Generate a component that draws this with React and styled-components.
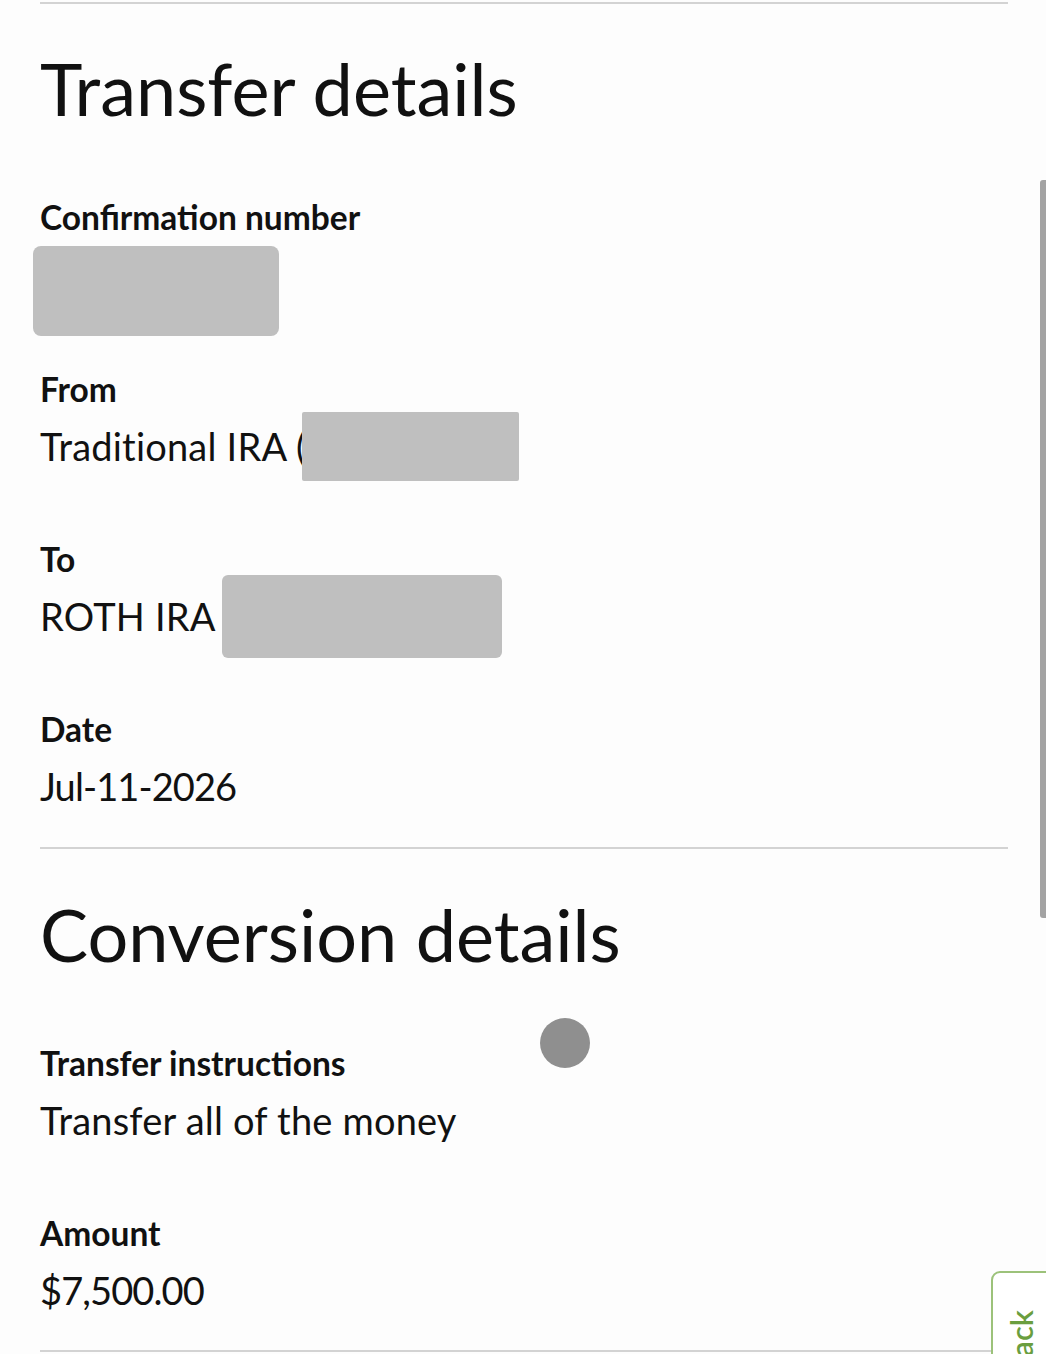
import React from 'react';
import styled, { createGlobalStyle } from 'styled-components';

const GlobalStyle = createGlobalStyle`
  html, body {
    margin: 0;
    padding: 0;
    background: #fdfdfd;
  }
  body {
    font-family: Lato, "Open Sans", sans-serif;
    color: #111;
  }
`;

const Page = styled.div`
  position: relative;
  width: 1046px;
  height: 1354px;
  overflow: hidden;
  padding: 0 38px 0 40px;
  box-sizing: border-box;
`;

const Divider = styled.hr`
  margin: ${(p) => p.$mt || 0}px 0 0;
  border: none;
  height: 2px;
  background: #d3d3d3;
`;

const Section = styled.section`
  display: flex;
  flex-direction: column;
`;

const Heading = styled.h2`
  margin: 0;
  font-size: 72px;
  font-weight: 400;
  line-height: 80px;
  padding: ${(p) => p.$top || 44}px 0 71px;
`;

const Field = styled.div`
  display: flex;
  flex-direction: column;
  padding-bottom: ${(p) => p.$gap || 72}px;
`;

const Label = styled.div`
  font-size: 33.5px;
  font-weight: 700;
  line-height: 36px;
  margin-bottom: 16px;
`;

const Value = styled.div`
  display: flex;
  align-items: center;
  height: 46px;
  font-size: 38px;
  line-height: 46px;
  white-space: nowrap;
  letter-spacing: ${(p) => (p.$numeric ? '-0.9px' : '0.2px')};
`;

const Redacted = styled.span`
  flex: none;
  display: block;
  width: ${(p) => p.$w}px;
  height: ${(p) => p.$h}px;
  margin-left: ${(p) => p.$ml || 0}px;
  margin-top: ${(p) => p.$mt || 0}px;
  background: #bfbfbf;
  border-radius: ${(p) => p.$r || 4}px;
`;

const Scrollbar = styled.div`
  position: absolute;
  right: 0;
  top: 180px;
  width: 6px;
  height: 738px;
  background: #a3a3a3;
  border-radius: 3px 0 0 3px;
`;

const Dot = styled.div`
  position: absolute;
  left: 540px;
  top: 1018px;
  width: 50px;
  height: 50px;
  border-radius: 50%;
  background: #8f8f8f;
`;

const FeedbackTab = styled.div`
  position: absolute;
  left: 991px;
  top: 1271px;
  width: 80px;
  height: 180px;
  border: 2px solid #9cc27a;
  border-radius: 9px 0 0 0;
  background: #fff;
  box-sizing: border-box;
`;

const FeedbackText = styled.span`
  position: absolute;
  left: 13px;
  top: 37px;
  writing-mode: vertical-rl;
  transform: rotate(180deg);
  font-size: 31px;
  line-height: 31px;
  color: #6a9e3f;
  font-weight: 600;
  white-space: nowrap;
`;

export default function App() {
  return (
    <>
      <GlobalStyle />
      <Page>
        <Divider $mt={2} />
        <Section>
          <Heading>Transfer details</Heading>
          <Field $gap={35}>
            <Label>Confirmation number</Label>
            <Redacted $w={246} $h={90} $r={8} $ml={-7} $mt={-5} />
          </Field>
          <Field>
            <Label>From</Label>
            <Value>
              Traditional IRA (
              <Redacted $w={217} $h={69} $r={2} $ml={-4} />
            </Value>
          </Field>
          <Field>
            <Label>To</Label>
            <Value>
              ROTH IRA
              <Redacted $w={280} $h={83} $r={6} $ml={6} />
            </Value>
          </Field>
          <Field $gap={38}>
            <Label>Date</Label>
            <Value $numeric>Jul-11-2026</Value>
          </Field>
        </Section>
        <Divider />
        <Section>
          <Heading $top={45}>Conversion details</Heading>
          <Field>
            <Label>Transfer instructions</Label>
            <Value>Transfer all of the money</Value>
          </Field>
          <Field $gap={37}>
            <Label>Amount</Label>
            <Value $numeric>$7,500.00</Value>
          </Field>
        </Section>
        <Divider />
        <Scrollbar />
        <Dot />
        <FeedbackTab>
          <FeedbackText>Feedback</FeedbackText>
        </FeedbackTab>
      </Page>
    </>
  );
}
